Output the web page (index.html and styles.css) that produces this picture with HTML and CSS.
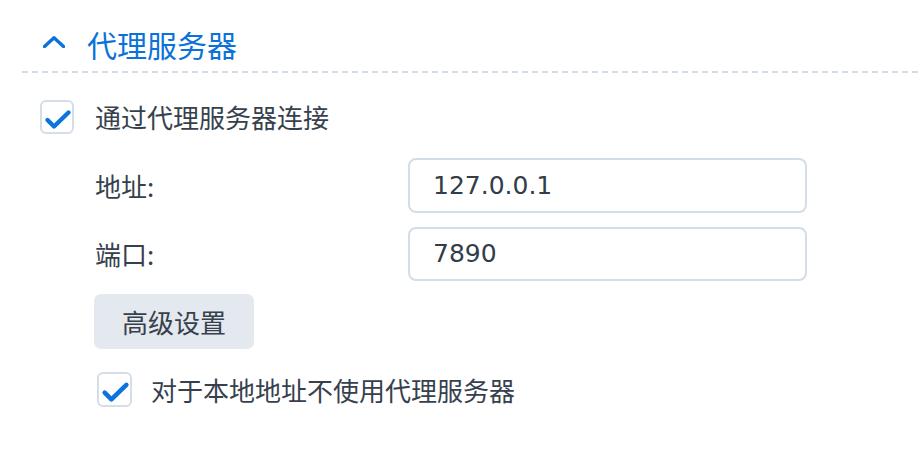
FILE: index.html
```
<!DOCTYPE html>
<html lang="zh">
<head>
<meta charset="utf-8">
<title>代理服务器</title>
<link rel="stylesheet" href="styles.css">
</head>
<body>
<div class="section">
  <div class="header">
    <svg class="chevron" width="22" height="12" viewBox="0 0 22 12"><path d="M1.5 10.5 L11 1.8 L20.5 10.5" fill="none" stroke="#0a72d8" stroke-width="3.4" stroke-linecap="round" stroke-linejoin="round"/></svg>
    <span class="title">代理服务器</span>
  </div>
  <div class="divider"></div>
  <div class="content">
    <label class="check-row main-check">
      <span class="checkbox">
        <svg width="30" height="30" viewBox="0 0 30 30"><path d="M5.5 18 L12 24.5 L26.5 10.5" fill="none" stroke="#0b74de" stroke-width="4.4" stroke-linecap="round" stroke-linejoin="round"/></svg>
      </span>
      <span class="check-label">通过代理服务器连接</span>
    </label>
    <div class="form">
      <div class="field field-addr">
        <span class="field-label">地址:</span>
        <div class="input">127.0.0.1</div>
      </div>
      <div class="field field-port">
        <span class="field-label">端口:</span>
        <div class="input">7890</div>
      </div>
    </div>
    <button class="btn">高级设置</button>
    <label class="check-row sub-check">
      <span class="checkbox">
        <svg width="31" height="31" viewBox="0 0 30 30"><path d="M5.5 18 L12 24.5 L26.5 10.5" fill="none" stroke="#0b74de" stroke-width="4.4" stroke-linecap="round" stroke-linejoin="round"/></svg>
      </span>
      <span class="check-label">对于本地地址不使用代理服务器</span>
    </label>
  </div>
</div>
</body>
</html>
```
FILE: styles.css
```
html, body {
  margin: 0;
  padding: 0;
  background: #ffffff;
}
body {
  width: 920px;
  height: 450px;
  overflow: hidden;
  font-family: "Noto Sans CJK SC", "Noto Sans", sans-serif;
  color: #36414d;
}
.section {
  padding-top: 26px;
}
.header {
  display: flex;
  align-items: center;
  height: 36px;
  padding-left: 43px;
}
.chevron {
  display: block;
  margin-right: 22px;
  margin-top: -4px;
}
.title {
  font-size: 30px;
  line-height: 36px;
  color: #0a72d8;
}
.divider {
  margin-top: 9px;
  margin-left: 22px;
  width: 896px;
  height: 2px;
  background: repeating-linear-gradient(to right, #d2dce6 0 6px, transparent 6px 10px);
}
.content {
  padding-left: 40px;
  display: flex;
  flex-direction: column;
  align-items: flex-start;
}
.check-row {
  display: flex;
  align-items: center;
}
.checkbox {
  box-sizing: border-box;
  display: flex;
  align-items: center;
  justify-content: center;
  border: 2px solid #d5dee8;
  border-radius: 6px;
  background: #fff;
}
.checkbox svg {
  display: block;
}
.check-label {
  font-size: 26px;
  line-height: 34px;
  color: #36414d;
}
.main-check {
  margin-top: 27px;
  height: 34px;
}
.main-check .checkbox {
  width: 34px;
  height: 34px;
  margin-right: 21px;
}
.form {
  margin-top: 24px;
  padding-left: 55px;
  display: flex;
  flex-direction: column;
  gap: 14px;
}
.field {
  display: flex;
  align-items: center;
}
.field-label {
  width: 313px;
  font-size: 26px;
  line-height: 34px;
  color: #36414d;
}
.input {
  box-sizing: border-box;
  width: 399px;
  height: 55px;
  border: 2px solid #d3dde7;
  border-radius: 8px;
  padding-left: 23px;
  font-family: "DejaVu Sans", "Noto Sans", sans-serif;
  font-size: 25px;
  line-height: 51px;
  color: #333d48;
}
.field-port .input {
  height: 54px;
  line-height: 50px;
}
.btn {
  margin-top: 13px;
  margin-left: 54px;
  width: 160px;
  height: 55px;
  border: none;
  border-radius: 7px;
  background: #e3e9ee;
  font-family: "Noto Sans CJK SC", "Noto Sans", sans-serif;
  font-size: 26px;
  color: #36414d;
  padding: 0;
}
.sub-check {
  margin-top: 23px;
  margin-left: 57px;
  height: 35px;
}
.sub-check .checkbox {
  width: 35px;
  height: 35px;
  margin-right: 19px;
}
```
